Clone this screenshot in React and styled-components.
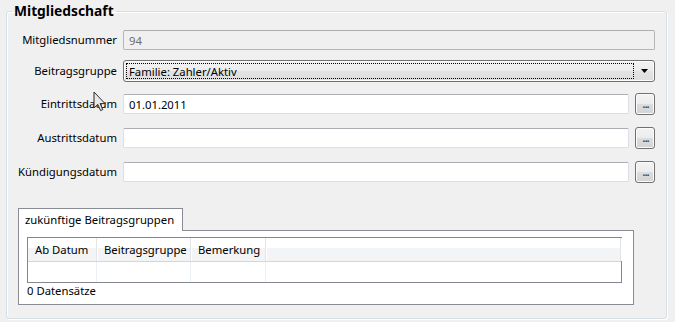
import React from 'react';
import styled, { createGlobalStyle } from 'styled-components';

const GlobalStyle = createGlobalStyle`
  body {
    margin: 0;
    background: #f0f0f0;
    font-family: "Noto Sans", "Open Sans", sans-serif;
    font-size: 11.3px;
    color: #000;
  }
`;

const Page = styled.div`
  position: relative;
  width: 675px;
  height: 322px;
  padding: 3px 0 0 6px;
  box-sizing: border-box;
  overflow: hidden;
`;

const Group = styled.fieldset`
  margin: 0;
  padding: 0 11px 0 0;
  width: 661px;
  height: 316px;
  box-sizing: border-box;
  border: 1px solid #d5dfe5;
  border-radius: 3px;
  box-shadow: 1px 1px 0 #fff, inset 1px 1px 0 #fff;
  min-width: 0;
`;

const Legend = styled.legend`
  margin-left: 5px;
  padding: 0 2px;
  font-weight: 700;
  font-size: 13.8px;
  line-height: 16px;
`;

const Row = styled.div`
  display: grid;
  grid-template-columns: 110px 1fr;
  column-gap: 6px;
  align-items: center;
  height: 22px;
  margin-top: ${p => p.$top}px;
`;

const Label = styled.label`
  text-align: right;
  white-space: nowrap;
  line-height: 16px;
`;

const TextBox = styled.div`
  height: 20px;
  box-sizing: border-box;
  padding: 0 5px;
  display: flex;
  align-items: center;
  background: ${p => (p.$disabled ? 'transparent' : '#fff')};
  color: ${p => (p.$disabled ? '#6d6d6d' : '#000')};
  border: 1px solid ${p => (p.$disabled ? '#b5b5b5' : '#dbdfe6')};
  border-top-color: ${p => (p.$disabled ? '#adadad' : '#abadb3')};
  border-radius: 2px;
  flex: 1;
`;

const Combo = styled.div`
  height: 22px;
  box-sizing: border-box;
  display: flex;
  align-items: stretch;
  border: 1px solid #707070;
  border-radius: 3px;
  background: linear-gradient(#f3f3f3 0%, #ececec 50%, #e3e3e3 51%, #dedede 100%);
  box-shadow: inset 0 0 0 1px #fbfbfb;
`;

const ComboText = styled.div`
  flex: 1;
  margin: 2px 0 2px 2px;
  padding-left: 2px;
  border: 1px dotted #000;
  display: flex;
  align-items: center;
`;

const ComboArrow = styled.div`
  width: 20px;
  display: flex;
  align-items: center;
  justify-content: center;
`;

const FieldWithButton = styled.div`
  display: flex;
  align-items: center;
  gap: 6px;
`;

const DotsButton = styled.div`
  width: 20px;
  height: 22px;
  box-sizing: border-box;
  border: 1px solid #707070;
  border-radius: 3px;
  background: linear-gradient(#f3f3f3 0%, #ececec 50%, #dddddd 51%, #d3d3d3 100%);
  box-shadow: inset 0 0 0 1px #fbfbfb;
  display: flex;
  justify-content: center;
  align-items: flex-end;
  font-size: 12px;
  line-height: 12px;
  padding: 0 0 4px 1px;
  letter-spacing: -1px;
  color: #333;
`;

const TabArea = styled.div`
  margin: 25px 0 0 11px;
  width: 616px;
`;

const Tab = styled.div`
  position: relative;
  z-index: 1;
  display: inline-flex;
  align-items: center;
  height: 23px;
  box-sizing: border-box;
  padding: 0 8px 1px 6px;
  margin-bottom: -1px;
  background: #fff;
  border: 1px solid #898c95;
  border-bottom: none;
`;

const TabPanel = styled.div`
  height: 75px;
  box-sizing: border-box;
  padding: 6px 11px 0 8px;
  background: #fff;
  border: 1px solid #898c95;
`;

const Table = styled.div`
  width: 595px;
  height: 46px;
  box-sizing: border-box;
  border: 1px solid #828790;
`;

const HeaderRow = styled.div`
  display: grid;
  grid-template-columns: 69px 94px 75px 1fr;
  height: 24px;
  box-sizing: border-box;
  border-bottom: 1px solid #d5d5d5;
  background: linear-gradient(#fff 0 10px, #f3f4f6 10px);
`;

const HeaderCell = styled.div`
  display: flex;
  align-items: center;
  padding-left: 7px;
  border-right: 1px solid #e3e5e9;
  box-shadow: 1px 0 0 #fff;
  white-space: nowrap;
`;

const DataRow = styled.div`
  display: grid;
  grid-template-columns: 69px 94px 75px 1fr;
  height: 20px;
`;

const DataCell = styled.div`
  border-right: 1px solid #eaf0f7;
  &:last-child { border-right: none; }
`;

const Status = styled.div`
  line-height: 16px;
`;

const Cursor = styled.svg`
  position: absolute;
  left: 93px;
  top: 91px;
`;

export default function App() {
  return (
    <>
      <GlobalStyle />
      <Page>
        <Group>
          <Legend>Mitgliedschaft</Legend>
          <Row $top={10}>
            <Label>Mitgliedsnummer</Label>
            <TextBox $disabled>94</TextBox>
          </Row>
          <Row $top={9}>
            <Label>Beitragsgruppe</Label>
            <Combo>
              <ComboText>Familie: Zahler/Aktiv</ComboText>
              <ComboArrow>
                <svg width="7" height="4" viewBox="0 0 7 4">
                  <path d="M0 0H7L3.5 4Z" fill="#000" />
                </svg>
              </ComboArrow>
            </Combo>
          </Row>
          <Row $top={11}>
            <Label>Eintrittsdatum</Label>
            <FieldWithButton>
              <TextBox>01.01.2011</TextBox>
              <DotsButton>...</DotsButton>
            </FieldWithButton>
          </Row>
          <Row $top={12}>
            <Label>Austrittsdatum</Label>
            <FieldWithButton>
              <TextBox />
              <DotsButton>...</DotsButton>
            </FieldWithButton>
          </Row>
          <Row $top={12}>
            <Label>Kündigungsdatum</Label>
            <FieldWithButton>
              <TextBox />
              <DotsButton>...</DotsButton>
            </FieldWithButton>
          </Row>
          <TabArea>
            <Tab>zukünftige Beitragsgruppen</Tab>
            <TabPanel>
              <Table>
                <HeaderRow>
                  <HeaderCell>Ab Datum</HeaderCell>
                  <HeaderCell>Beitragsgruppe</HeaderCell>
                  <HeaderCell>Bemerkung</HeaderCell>
                  <HeaderCell />
                </HeaderRow>
                <DataRow>
                  <DataCell />
                  <DataCell />
                  <DataCell />
                  <DataCell />
                </DataRow>
              </Table>
              <Status>0 Datensätze</Status>
            </TabPanel>
          </TabArea>
        </Group>
        <Cursor width="13" height="21" viewBox="0 0 13 21">
          <path
            d="M1 1V17L4.8 13.4L7.6 19.6L9.8 18.6L7.1 12.6H12Z"
            fill="#e8e8e8"
            stroke="#2a2a2a"
            strokeWidth="1"
            strokeLinejoin="round"
          />
        </Cursor>
      </Page>
    </>
  );
}
